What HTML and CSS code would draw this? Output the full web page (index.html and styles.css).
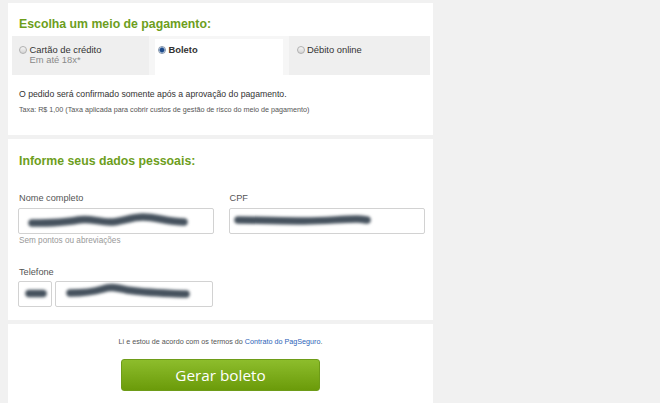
FILE: index.html
```html
<!DOCTYPE html>
<html lang="pt-BR">
<head>
<meta charset="utf-8">
<title>Pagamento</title>
<link rel="stylesheet" href="styles.css">
</head>
<body>
<div class="page">
  <section class="panel panel-pay">
    <h2 class="title">Escolha um meio de pagamento:</h2>
    <div class="tabs">
      <div class="tab">
        <span class="radio"></span>
        <div class="tab-text">
          <div class="tab-label">Cartão de crédito</div>
          <div class="tab-sub">Em até 18x*</div>
        </div>
      </div>
      <div class="tab tab-active">
        <span class="radio radio-on"></span>
        <div class="tab-text">
          <div class="tab-label">Boleto</div>
        </div>
      </div>
      <div class="tab tab-last">
        <span class="radio"></span>
        <div class="tab-text">
          <div class="tab-label">Débito online</div>
        </div>
      </div>
    </div>
    <p class="notice">O pedido será confirmado somente após a aprovação do pagamento.</p>
    <p class="fee">Taxa: R$ 1,00 (Taxa aplicada para cobrir custos de gestão de risco do meio de pagamento)</p>
  </section>

  <section class="panel panel-data">
    <h2 class="title">Informe seus dados pessoais:</h2>
    <div class="fields">
      <div class="field">
        <div class="label">Nome completo</div>
        <div class="input">
          <svg class="blur" viewBox="0 0 195 26" width="195" height="26"><path d="M14 15 C30 15 45 15 60 12 C72 10 80 14 92 14 C104 14 112 9 125 9 C138 9 150 14 166 14" /></svg>
        </div>
        <div class="hint">Sem pontos ou abreviações</div>
      </div>
      <div class="field">
        <div class="label">CPF</div>
        <div class="input">
          <svg class="blur" viewBox="0 0 196 26" width="196" height="26"><path d="M9 12 C30 12 55 13 75 13 C100 13 110 11 128 11 C135 11 136 12 138 12" /></svg>
        </div>
      </div>
    </div>
    <div class="label label-phone">Telefone</div>
    <div class="phone">
      <div class="input input-ddd">
        <svg class="blur" viewBox="0 0 34 26" width="34" height="26"><path d="M11 12.5 L25 12.5" /></svg>
      </div>
      <div class="input input-num">
        <svg class="blur" viewBox="0 0 158 26" width="158" height="26"><path d="M15 12 C30 12 38 11 48 8 C56 5 62 7 72 9 C90 12 110 12 131 13" /></svg>
      </div>
    </div>
  </section>

  <section class="panel panel-submit">
    <p class="terms">Li e estou de acordo com os termos do <a href="#">Contrato do PagSeguro</a>.</p>
    <button class="btn" type="button">Gerar boleto</button>
  </section>
</div>
</body>
</html>
```

FILE: styles.css
```css
html, body {
  margin: 0;
  padding: 0;
}
body {
  background: #f1f1f1;
  font-family: "Liberation Sans", Arial, sans-serif;
  color: #333;
  height: 403px;
  overflow: hidden;
}
.page {
  width: 425px;
  margin-left: 8px;
  padding-top: 3px;
  display: flex;
  flex-direction: column;
  gap: 4px;
}
.panel {
  background: #fff;
}
.title {
  margin: 0 0 0 11px;
  font-size: 12.3px;
  line-height: 14px;
  font-weight: bold;
  color: #6d9e1c;
}

/* panel 1 */
.panel-pay {
  padding: 14px 3px 19.5px 4px;
}
.panel-pay .title {
  margin-left: 7px;
}
.tabs {
  margin-top: 5px;
  height: 39px;
  display: flex;
  background: #f6f6f6;
}
.tab {
  width: 137px;
  background: #efefef;
  display: flex;
  align-items: flex-start;
  gap: 3px;
  padding: 9px 0 0 6.5px;
  box-sizing: border-box;
}
.tab-active {
  width: 128px;
  margin: 3px 6px 0 6px;
  background: #fff;
  padding: 6px 0 0 2.5px;
}
.tab-last {
  flex: 1;
  padding-left: 7.5px;
  gap: 2.5px;
}
.radio {
  width: 8px;
  height: 8px;
  margin-top: 1px;
  border-radius: 50%;
  box-sizing: border-box;
  border: 1px solid #b0b0b0;
  background: linear-gradient(#f6f6f6, #d4d4d4);
  flex: none;
}
.radio-on {
  border-color: #8595aa;
  background: radial-gradient(circle, #1d4a88 0 1.8px, #5d86bd 2.4px, #dfe6ef 3px);
}
.tab-label {
  font-size: 9.4px;
  line-height: 10px;
  color: #333;
}
.tab-active .tab-label {
  font-weight: bold;
}
.tab-sub {
  font-size: 9.4px;
  line-height: 10px;
  color: #8a8a8a;
}
.notice {
  margin: 13px 0 0 7px;
  font-size: 8.7px;
  line-height: 12px;
}
.fee {
  margin: 5px 0 0 7px;
  font-size: 7.2px;
  line-height: 10px;
  color: #555;
}

/* panel 2 */
.panel-data {
  padding: 15px 9px 12.5px 10px;
}
.panel-data .title {
  margin-left: 1px;
}
.fields {
  margin-top: 25.5px;
  display: grid;
  grid-template-columns: 195.5px 196px;
  column-gap: 15px;
}
.label {
  font-size: 9.2px;
  line-height: 11px;
  color: #555;
  padding-left: 1px;
  margin-bottom: 3.5px;
}
.label-phone {
  margin-top: 21px;
}
.input {
  height: 26px;
  box-sizing: border-box;
  border: 1px solid #d2d2d2;
  border-radius: 2px;
  background: #fff;
  overflow: hidden;
  position: relative;
}
.blur {
  position: absolute;
  left: -1px;
  top: -1px;
  filter: blur(1.4px);
}
.blur path {
  fill: none;
  stroke: #46525e;
  stroke-width: 7.5;
  stroke-linecap: round;
}
.hint {
  margin-top: 2px;
  font-size: 8.2px;
  line-height: 10px;
  color: #999;
  padding-left: 1px;
}
.phone {
  display: flex;
  gap: 2.5px;
}
.input-ddd {
  width: 34px;
}
.input-num {
  width: 158px;
}

/* panel 3 */
.panel-submit {
  padding: 13px 0 20px;
  display: flex;
  flex-direction: column;
  align-items: center;
}
.terms {
  margin: 0;
  font-size: 7.2px;
  line-height: 10px;
  color: #555;
}
.terms a {
  color: #2b63b8;
  text-decoration: none;
}
.btn {
  margin-top: 12.5px;
  width: 199px;
  height: 32px;
  border: 1px solid #6e9c18;
  border-radius: 3px;
  background: linear-gradient(#8dbd2c, #6b9b0a);
  color: #fff;
  font-family: "Open Sans", sans-serif;
  font-size: 15.3px;
  padding: 0;
}
```
